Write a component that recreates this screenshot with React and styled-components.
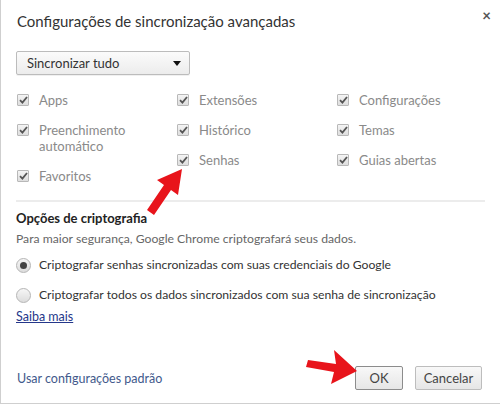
import React from 'react';
import styled, { createGlobalStyle } from 'styled-components';

const GlobalStyle = createGlobalStyle`
    html, body {
        margin: 0;
        padding: 0;
        background: #fff;
    }
    body {
        font-family: Lato, "Open Sans", "Liberation Sans", sans-serif;
        font-size: 12.5px;
        color: #333;
    }
`

const Dialog = styled.div`
    position: relative;
    box-sizing: border-box;
    width: 500px;
    height: 404px;
    border-left: 1px solid #cfcfcf;
    border-bottom: 1px solid #cfcfcf;
    display: flex;
    flex-direction: column;
    padding: 0 15px 0 15px;
    overflow: hidden;
`

const Header = styled.div`
    display: flex;
    justify-content: space-between;
    align-items: flex-start;
    padding-top: 11px;
    margin-right: -6px;
`

const Title = styled.h1`
    margin: 0 0 0 1px;
    font-size: 15px;
    font-weight: 400;
    line-height: 20px;
    color: #333;
`

const Close = styled.span`
    font-size: 15px;
    line-height: 10px;
    color: #555;
    font-weight: 700;
    margin-top: -1px;
`

const Select = styled.div`
    margin-top: 20px;
    box-sizing: border-box;
    width: 174px;
    height: 24px;
    display: flex;
    align-items: center;
    justify-content: space-between;
    padding: 0 8px 0 10px;
    border: 1px solid #bcbcbc;
    border-radius: 2px;
    background: linear-gradient(#fbfbfb, #ececec);
    box-shadow: 0 1px 0 rgba(0, 0, 0, 0.06);
    font-size: 13px;
    color: #333;
`

const Caret = styled.span`
    width: 0;
    height: 0;
    border-left: 4px solid transparent;
    border-right: 4px solid transparent;
    border-top: 5px solid #111;
`

const Columns = styled.div`
    margin-top: 17px;
    display: grid;
    grid-template-columns: 160px 160px 160px;
`

const Column = styled.div`
    display: flex;
    flex-direction: column;
    gap: 14px;
`

const CheckItem = styled.label`
    display: flex;
    align-items: flex-start;
    gap: 10px;
    line-height: 16px;
    color: #8a8a8a;
    font-size: 13px;
    white-space: pre-line;
`

const Box = styled.span`
    flex: none;
    box-sizing: border-box;
    width: 12px;
    height: 12px;
    margin: 2px 0 0 1px;
    border: 1px solid #b8b8b8;
    border-radius: 1px;
    background: linear-gradient(#f4f4f4, #dedede);
    display: flex;
    align-items: center;
    justify-content: center;
`

const Divider = styled.hr`
    margin: 16px 0 0 0;
    border: 0;
    border-top: 2px solid #ececec;
`

const Heading = styled.div`
    margin-top: 8px;
    font-weight: 700;
    line-height: 16px;
    font-size: 13px;
    color: #222;
`

const Note = styled.div`
    margin-top: 5px;
    line-height: 16px;
    font-size: 12.2px;
    color: #666;
`

const Options = styled.div`
    margin-top: 10px;
    display: flex;
    flex-direction: column;
    gap: 14px;
`

const RadioItem = styled.label`
    display: flex;
    align-items: center;
    gap: 8px;
    line-height: 16px;
    font-size: 12.2px;
    color: #333;
`

const Radio = styled.span`
    flex: none;
    box-sizing: border-box;
    width: 15px;
    height: 15px;
    border-radius: 50%;
    border: 1px solid #b5b5b5;
    background: linear-gradient(#f6f6f6, #dcdcdc);
    display: flex;
    align-items: center;
    justify-content: center;

    &::after {
        content: '';
        width: 7px;
        height: 7px;
        border-radius: 50%;
        background: ${(p) => (p.$on ? '#444' : 'transparent')};
    }
`

const Link = styled.a`
    margin-top: 6px;
    align-self: flex-start;
    line-height: 16px;
    font-size: 12.5px;
    color: #25378a;
    text-decoration: underline;
`

const Footer = styled.div`
    margin-top: auto;
    display: flex;
    align-items: center;
    justify-content: space-between;
    padding: 0 3px 13px 1px;
`

const FooterLink = styled.a`
    font-size: 12.5px;
    color: #42598c;
    text-decoration: none;
`

const Buttons = styled.div`
    display: flex;
    gap: 12px;
`

const Button = styled.button`
    box-sizing: border-box;
    height: 24px;
    width: ${(p) => p.$w}px;
    padding: 0;
    border: 1px solid ${(p) => (p.$focus ? '#8c8c8c' : '#bdbdbd')};
    border-radius: 2px;
    background: linear-gradient(#f8f8f8, #e6e6e6);
    font-family: inherit;
    font-size: 13px;
    color: #444;
`

const Arrow = styled.svg`
    position: absolute;
    left: 0;
    top: 0;
    pointer-events: none;
`

function Check() {
    return (
        <svg width="9" height="8" viewBox="0 0 9 8">
            <path d="M1 4.2 L3.4 6.6 L8 1" fill="none" stroke="#555" strokeWidth="1.8" />
        </svg>
    );
}

const columns = [
    ['Apps', 'Preenchimento\nautomático', 'Favoritos'],
    ['Extensões', 'Histórico', 'Senhas'],
    ['Configurações', 'Temas', 'Guias abertas'],
];

function App() {
    return (
        <Dialog>
            <GlobalStyle />
            <Header>
                <Title>Configurações de sincronização avançadas</Title>
                <Close>×</Close>
            </Header>

            <Select>
                <span>Sincronizar tudo</span>
                <Caret />
            </Select>

            <Columns>
                {columns.map((col, i) => (
                    <Column key={i}>
                        {col.map((name) => (
                            <CheckItem key={name}>
                                <Box><Check /></Box>
                                <span>{name}</span>
                            </CheckItem>
                        ))}
                    </Column>
                ))}
            </Columns>

            <Divider />
            <Heading>Opções de criptografia</Heading>
            <Note>Para maior segurança, Google Chrome criptografará seus dados.</Note>

            <Options>
                <RadioItem><Radio $on />Criptografar senhas sincronizadas com suas credenciais do Google</RadioItem>
                <RadioItem><Radio />Criptografar todos os dados sincronizados com sua senha de sincronização</RadioItem>
            </Options>
            <Link href="#">Saiba mais</Link>

            <Footer>
                <FooterLink href="#">Usar configurações padrão</FooterLink>
                <Buttons>
                    <Button $focus $w={48}>OK</Button>
                    <Button $w={67}>Cancelar</Button>
                </Buttons>
            </Footer>

            <Arrow width="500" height="404">
                <g fill="#e8141b">
                    <polygon points="146,210 153,215 170,190 177,195 181,169 156,180 163,185" />
                    <polygon points="307,360 305,367 333,372 330,384 356,371 333,350 335,364" />
                </g>
            </Arrow>
        </Dialog>
    );
}

export default App;
